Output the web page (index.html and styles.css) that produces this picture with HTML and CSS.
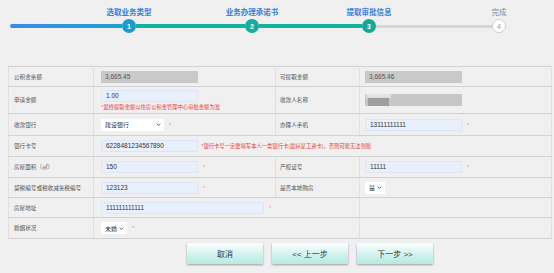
FILE: index.html
```html
<!DOCTYPE html>
<html lang="zh-CN">
<head>
<meta charset="utf-8">
<title>提取审批信息</title>
<link rel="stylesheet" href="styles.css">
</head>
<body>
<div class="steps">
  <div class="seg seg-blue"></div>
  <div class="label l1"><span class="lbl on">选取业务类型</span></div>
  <div class="dot d1">1</div>
  <div class="seg seg-teal s2"></div>
  <div class="label l2"><span class="lbl on">业务办理承诺书</span></div>
  <div class="dot d2">2</div>
  <div class="seg seg-teal s3"></div>
  <div class="label l3"><span class="lbl on">提取审批信息</span></div>
  <div class="dot d3">3</div>
  <div class="seg seg-gray s4"></div>
  <div class="label l4"><span class="lbl off">完成</span></div>
  <div class="dot d4">4</div>
</div>

<table class="form-table">
  <colgroup>
    <col class="c1"><col class="c2"><col class="c3"><col class="c4">
  </colgroup>
  <tr class="r-a">
    <td class="lab">公积金余额</td>
    <td class="val"><div class="inp ro">3,665.45</div></td>
    <td class="lab lab-r">可提取金额</td>
    <td class="val val-r"><div class="inp ro">3,665.46</div></td>
  </tr>
  <tr class="r-b">
    <td class="lab">申请金额</td>
    <td class="val">
      <div class="inp ed">1.00</div>
      <div class="note">*最终提取金额以住房公积金管理中心审批金额为准</div>
    </td>
    <td class="lab lab-r">收款人名称</td>
    <td class="val val-r"><div class="inp ro redact"><span class="blur-a"></span><span class="blur-b"></span></div></td>
  </tr>
  <tr class="r-c">
    <td class="lab">收款银行</td>
    <td class="val"><div class="line"><div class="sel sel-bank">建设银行<svg class="chev" viewBox="0 0 8 5"><path d="M1 1l3 3 3-3" fill="none" stroke="#333" stroke-width="1.3"/></svg></div><span class="star">*</span></div></td>
    <td class="lab lab-r">办理人手机</td>
    <td class="val val-r"><div class="line"><div class="inp ed">13111111111</div><span class="star">*</span></div></td>
  </tr>
  <tr class="r-d">
    <td class="lab">银行卡号</td>
    <td class="val" colspan="3"><div class="line"><div class="inp ed">6228481234567890</div><span class="note note-in">*银行卡号一定要填写本人一类银行卡(最好是工资卡)，否则可能无法到账</span></div></td>
  </tr>
  <tr class="r-d">
    <td class="lab">房屋面积（㎡）</td>
    <td class="val"><div class="line"><div class="inp ed">150</div><span class="star">*</span></div></td>
    <td class="lab lab-r">产权证号</td>
    <td class="val val-r"><div class="line"><div class="inp ed">11111</div><span class="star">*</span></div></td>
  </tr>
  <tr class="r-e">
    <td class="lab">契税编号或税收减免税编号</td>
    <td class="val"><div class="line"><div class="inp ed">123123</div><span class="star">*</span></div></td>
    <td class="lab lab-r">是否本地购房</td>
    <td class="val val-r"><div class="sel sel-yes">是<svg class="chev" viewBox="0 0 8 5"><path d="M1 1l3 3 3-3" fill="none" stroke="#333" stroke-width="1.3"/></svg></div></td>
  </tr>
  <tr class="r-e">
    <td class="lab">房屋地址</td>
    <td class="val" colspan="2"><div class="line"><div class="inp ed inp-wide">111111111111</div><span class="star">*</span></div></td>
    <td class="val"></td>
  </tr>
  <tr class="r-d">
    <td class="lab">婚姻状况</td>
    <td class="val" colspan="2"><div class="line"><div class="sel sel-mar">未婚<svg class="chev" viewBox="0 0 8 5"><path d="M1 1l3 3 3-3" fill="none" stroke="#333" stroke-width="1.3"/></svg></div><span class="star">*</span></div></td>
    <td class="val"></td>
  </tr>
</table>

<div class="actions">
  <button class="btn">取消</button>
  <button class="btn">&lt;&lt; 上一步</button>
  <button class="btn">下一步 &gt;&gt;</button>
</div>
</body>
</html>
```
FILE: styles.css
```css
html, body {
  margin: 0;
  padding: 0;
}
body {
  background: #f0f0f0;
  font-family: "Liberation Sans", "Noto Sans CJK SC", sans-serif;
  color: #444;
  width: 554px;
  height: 273px;
  overflow: hidden;
}

/* ---------- steps ---------- */
.steps {
  display: grid;
  grid-template-columns: 10px 112px 14px 109px 14px 103px 14px 116px 14px;
  grid-template-rows: 10px 14px;
  row-gap: 2px;
  padding-top: 7px;
}
.label {
  grid-row: 1;
  display: flex;
  justify-content: center;
  white-space: nowrap;
}
.l1 { grid-column: 3; }
.l2 { grid-column: 5; }
.l3 { grid-column: 7; }
.l4 { grid-column: 9; }
.lbl {
  font-family: "Noto Sans CJK SC", sans-serif;
  font-size: 7.5px;
  line-height: 10px;
}
.lbl.on { color: #3a7fd8; font-weight: bold; }
.lbl.off { color: #888; }

.seg {
  grid-row: 2;
  align-self: center;
  height: 4px;
}
.seg-blue {
  grid-column: 2;
  background: linear-gradient(90deg, #3a8be8, #1ea3d3);
  border-radius: 2px 0 0 2px;
}
.seg-teal { background: #14b19d; }
.seg-gray { background: #d6d6d6; height: 3px; }
.s2 { grid-column: 4; }
.s3 { grid-column: 6; }
.s4 { grid-column: 8; }

.dot {
  grid-row: 2;
  width: 14px;
  height: 14px;
  border-radius: 50%;
  box-sizing: border-box;
  display: flex;
  align-items: center;
  justify-content: center;
  font-size: 7px;
  font-weight: bold;
  color: #fff;
}
.d1 { grid-column: 3; background: #1b9bd3; }
.d2 { grid-column: 5; background: #12ae9b; }
.d3 { grid-column: 7; background: #10a998; }
.d4 { grid-column: 9; background: #fff; border: 1px solid #cfcfcf; color: #999; font-weight: normal; }

/* ---------- table ---------- */
.form-table {
  margin: 33px 0 0 8px;
  width: 543px;
  border-collapse: collapse;
  table-layout: fixed;
}
.c1 { width: 85px; }
.c2 { width: 182px; }
.c3 { width: 84px; }
.c4 { width: 192px; }
.form-table td {
  border: 1px solid #e0e0e0;
  border-top-color: #d2d2d2;
  border-bottom-color: #d2d2d2;
  padding: 0;
  vertical-align: middle;
}
.r-a td { height: 19px; }
.r-b td { height: 26px; }
.r-c td { height: 21px; }
.r-d td { height: 20px; }
.r-e td { height: 19px; }

.lab {
  font-family: "Noto Sans CJK SC", sans-serif;
  font-size: 5.6px;
  color: #555;
  padding-left: 5px !important;
  white-space: nowrap;
}
.lab-r { padding-left: 4px !important; }
.val { padding-left: 7px !important; }
.val-r { padding-left: 5px !important; }

.line {
  display: flex;
  align-items: center;
}
.inp {
  width: 97px;
  height: 12px;
  box-sizing: border-box;
  padding-left: 4px;
  font-size: 6.5px;
  line-height: 12px;
  white-space: nowrap;
  overflow: hidden;
}
.inp-wide { width: 163px; }
.ro {
  background: #c9c9c9;
  color: #555;
}
.ed {
  background: #e8f0fe;
  border: 1px solid #dce6f6;
  line-height: 10px;
  color: #333;
}
.redact {
  position: relative;
  background: #c6c6c6;
}
.blur-a {
  position: absolute;
  left: 1px;
  top: -3px;
  width: 25px;
  height: 7px;
  background: #e4e4e4;
  filter: blur(1px);
}
.blur-b {
  position: absolute;
  left: 3px;
  top: 4px;
  width: 21px;
  height: 8px;
  background: #9e9e9e;
  filter: blur(0.6px);
}
.note {
  font-family: "Noto Sans CJK SC", sans-serif;
  font-size: 5.3px;
  line-height: 8px;
  color: #e8383d;
  margin-top: 1px;
  white-space: nowrap;
}
.note-in { margin: 0 0 0 3px; }
.star {
  font-size: 6px;
  color: #e99;
  margin-left: 5px;
  line-height: 8px;
}

.sel {
  display: flex;
  align-items: center;
  justify-content: space-between;
  height: 12px;
  box-sizing: border-box;
  background: #fff;
  font-family: "Noto Sans CJK SC", sans-serif;
  font-size: 6px;
  color: #333;
  padding: 0 3px 0 4px;
}
.sel-bank { width: 63px; }
.sel-yes { width: 20px; }
.sel-mar { width: 26px; }
.chev {
  width: 5px;
  height: 3px;
}

/* ---------- buttons ---------- */
.actions {
  display: flex;
  gap: 9px;
  padding-left: 187px;
  margin-top: 4px;
}
.btn {
  width: 76px;
  height: 21px;
  border: none;
  padding: 0;
  background: linear-gradient(#fbfefd, #c7f0ea 70%, #b7ebe2);
  box-shadow: 0 1px 2px rgba(0, 0, 0, 0.35);
  font-family: "Liberation Sans", "Noto Sans CJK SC", sans-serif;
  font-size: 8px;
  color: #333;
}
```
